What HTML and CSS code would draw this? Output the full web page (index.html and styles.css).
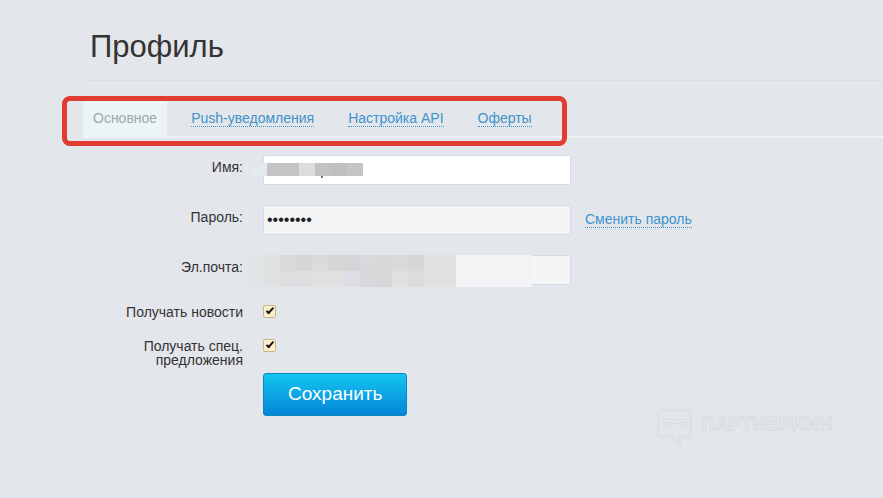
FILE: index.html
```html
<!DOCTYPE html>
<html lang="ru">
<head>
    <meta charset="UTF-8">
    <meta name="viewport" content="width=device-width, initial-scale=1.0">
    <title>Профиль</title>
    <link rel="stylesheet" href="styles.css">
</head>
<body>
    <div class="container">
        <h1>Профиль</h1>
        <nav class="tabs">
            <a href="#" class="tab active">Основное</a>
            <a href="#" class="tab"><span>Push-уведомления</span></a>
            <a href="#" class="tab"><span>Настройка API</span></a>
            <a href="#" class="tab"><span>Оферты</span></a>
            <div class="highlight"></div>
        </nav>
        <form class="profile-form">
            <div class="row">
                <label for="name">Имя:</label>
                <div class="field">
                    <input type="text" id="name">
                    <svg class="mosaic mosaic-name" width="112" height="15" shape-rendering="crispEdges">
                        <rect width="16" height="13" fill="#e4e9ec"/>
                        <rect x="16" width="32" height="13" fill="#c5c3c4"/>
                        <rect x="48" width="16" height="13" fill="#dddddf"/>
                        <rect x="64" width="16" height="13" fill="#c4c3c2"/>
                        <rect x="80" width="16" height="13" fill="#bfc1bf"/>
                        <rect x="96" width="16" height="13" fill="#c6c4c4"/>
                        <rect x="70" y="13" width="2" height="2" fill="#6b7468"/>
                    </svg>
                </div>
            </div>
            <div class="row">
                <label for="password">Пароль:</label>
                <div class="field">
                    <input type="password" id="password" value="password" readonly>
                </div>
                <a href="#" class="change">Сменить пароль</a>
            </div>
            <div class="row">
                <label for="email">Эл.почта:</label>
                <div class="field">
                    <input type="text" id="email" readonly>
                    <svg class="mosaic mosaic-email" width="283" height="32" shape-rendering="crispEdges">
                        <rect width="15" height="32" fill="#e0e6e8"/>
                        <rect x="15" width="192" height="32" fill="#dfe1e1"/>
                        <rect x="31" width="16" height="16" fill="#d7dad8"/>
                        <rect x="47" width="16" height="16" fill="#d5d7d6"/>
                        <rect x="63" width="16" height="16" fill="#dadcdb"/>
                        <rect x="79" width="16" height="16" fill="#d5d6d6"/>
                        <rect x="95" width="16" height="16" fill="#d4d5d9"/>
                        <rect x="111" width="16" height="16" fill="#d8d9da"/>
                        <rect x="127" width="16" height="16" fill="#d6d7d8"/>
                        <rect x="143" width="16" height="16" fill="#d9dbda"/>
                        <rect x="159" width="16" height="16" fill="#d5d6d8"/>
                        <rect x="31" y="16" width="32" height="16" fill="#dcdee0"/>
                        <rect x="95" y="16" width="16" height="16" fill="#dddee3"/>
                        <rect x="111" y="16" width="16" height="16" fill="#d7d8da"/>
                        <rect x="127" y="16" width="16" height="16" fill="#d5d7d8"/>
                        <rect x="159" y="16" width="16" height="16" fill="#dbdcde"/>
                        <rect x="207" width="76" height="32" fill="#f2f3f5"/>
                    </svg>
                </div>
            </div>
            <div class="row check-row">
                <label for="news">Получать новости</label>
                <input type="checkbox" id="news" checked>
            </div>
            <div class="row check-row">
                <label for="offers">Получать спец. предложения</label>
                <input type="checkbox" id="offers" checked>
            </div>
            <button type="submit">Сохранить</button>
        </form>
    </div>
    <div class="watermark">
        <svg width="36" height="40" viewBox="0 -1 36 40" fill="none" stroke="#d6dbdd" stroke-width=".8">
            <path d="M3.500 .5h28q3 0 3 3v22q0 3-3 3h-8v8q0 2-2 .5l-8-8.500h-10q-3 0-3-3v-22q0-3 3-3z"/>
            <path d="M4.500 2.500h26q2 0 2 2v20q0 2-2 2h-9v8l-7.500-8h-9.500q-2 0-2-2v-20q0-2 2-2z"/>
            <path d="M5.500 10.500h24v5q0 2.500-2.500 2.500h-3q-3 0-3.500-4h-6q-.5 4-3.500 4h-3q-2.500 0-2.500-2.500z"/>
            <path d="M7.500 13.500h4.500q-.5 2.500-2 2.500h-1q-1.500 0-1.500-1zM23 13.500h4.500v1.500q0 1-1.500 1h-1q-1.500 0-2-2.500z"/>
        </svg>
        <span>ПАРТНЕРКИН</span>
    </div>
</body>
</html>
```
FILE: styles.css
```css
body {
    margin: 0;
    background-color: #e3e6eb;
    font-family: Arial, 'Liberation Sans', sans-serif;
    font-size: 14px;
    color: #333333;
}

.container {
    padding-left: 83px;
    padding-top: 12px;
}

h1 {
    margin: 0;
    padding: 17px 7px 15px;
    font-size: 31px;
    line-height: 36px;
    font-weight: normal;
    border-bottom: 1px solid #dcdfe3;
}

a {
    color: #4193cb;
    text-decoration: none;
}

.tabs {
    position: relative;
    display: flex;
    gap: 14px;
    margin-top: 20px;
    border-bottom: 2px solid #f0f2f6;
}

.tab {
    padding: 9px 10px;
    line-height: 17px;
}

.tab span,
.change {
    display: inline-block;
    line-height: 16px;
    border-bottom: 1px dotted #4193cb;
}

.active {
    margin-bottom: -2px;
    padding-bottom: 11px;
    background-color: #ebf4f6;
    color: #9da9ab;
}

/* red frame around the tabs */
.highlight {
    position: absolute;
    top: -5px;
    left: -21px;
    width: 495px;
    height: 40px;
    border: 5px solid #e03c31;
    border-radius: 8px;
}

.profile-form {
    padding-top: 17px;
}

.row {
    display: flex;
    align-items: flex-start;
    margin-bottom: 20px;
}

label {
    width: 120px;
    margin-left: 40px;
    margin-right: 20px;
    padding-top: 4px;
    line-height: 16px;
    text-align: right;
}

.field {
    position: relative;
}

.field input {
    display: block;
    box-sizing: border-box;
    width: 308px;
    height: 30px;
    padding: 0 3px;
    border: 1px solid #cfdde4;
    border-radius: 2px;
    background-color: #ffffff;
    font-family: inherit;
    font-size: 16px;
    color: #222222;
}

.field input[readonly] {
    background-color: #f5f5f5;
}

.mosaic {
    position: absolute;
}

.mosaic-name {
    top: 8px;
    left: -12px;
}

.mosaic-email {
    top: 0;
    left: -14px;
}

.change {
    margin-top: 6px;
    margin-left: 14px;
}

.check-row label {
    padding-top: 0;
    line-height: 14px;
}

.check-row input {
    appearance: none;
    position: relative;
    width: 13px;
    height: 13px;
    margin: 0;
    border: 1px solid #c9b68e;
    border-radius: 2px;
    background-color: #fdeecb;
}

.check-row input:checked::after {
    content: '';
    position: absolute;
    left: 4px;
    top: 0;
    width: 2px;
    height: 6px;
    border: solid #111111;
    border-width: 0 2px 2px 0;
    transform: rotate(42deg);
}

button {
    display: block;
    height: 43px;
    margin-top: -14px;
    margin-left: 180px;
    padding: 0 24px 2px;
    border: 1px solid #0a86c0;
    border-radius: 3px;
    background: linear-gradient(#14c5f0, #0486d8);
    font-family: inherit;
    font-size: 19px;
    color: #ffffff;
}

.watermark {
    position: absolute;
    right: 50px;
    bottom: 50px;
    display: flex;
    gap: 8px;
    font-family: 'DejaVu Sans', sans-serif;
    font-size: 17px;
    line-height: 32px;
    font-weight: bold;
    color: #e3e6eb;
    -webkit-text-stroke: 1px #d7dcde;
}
```
